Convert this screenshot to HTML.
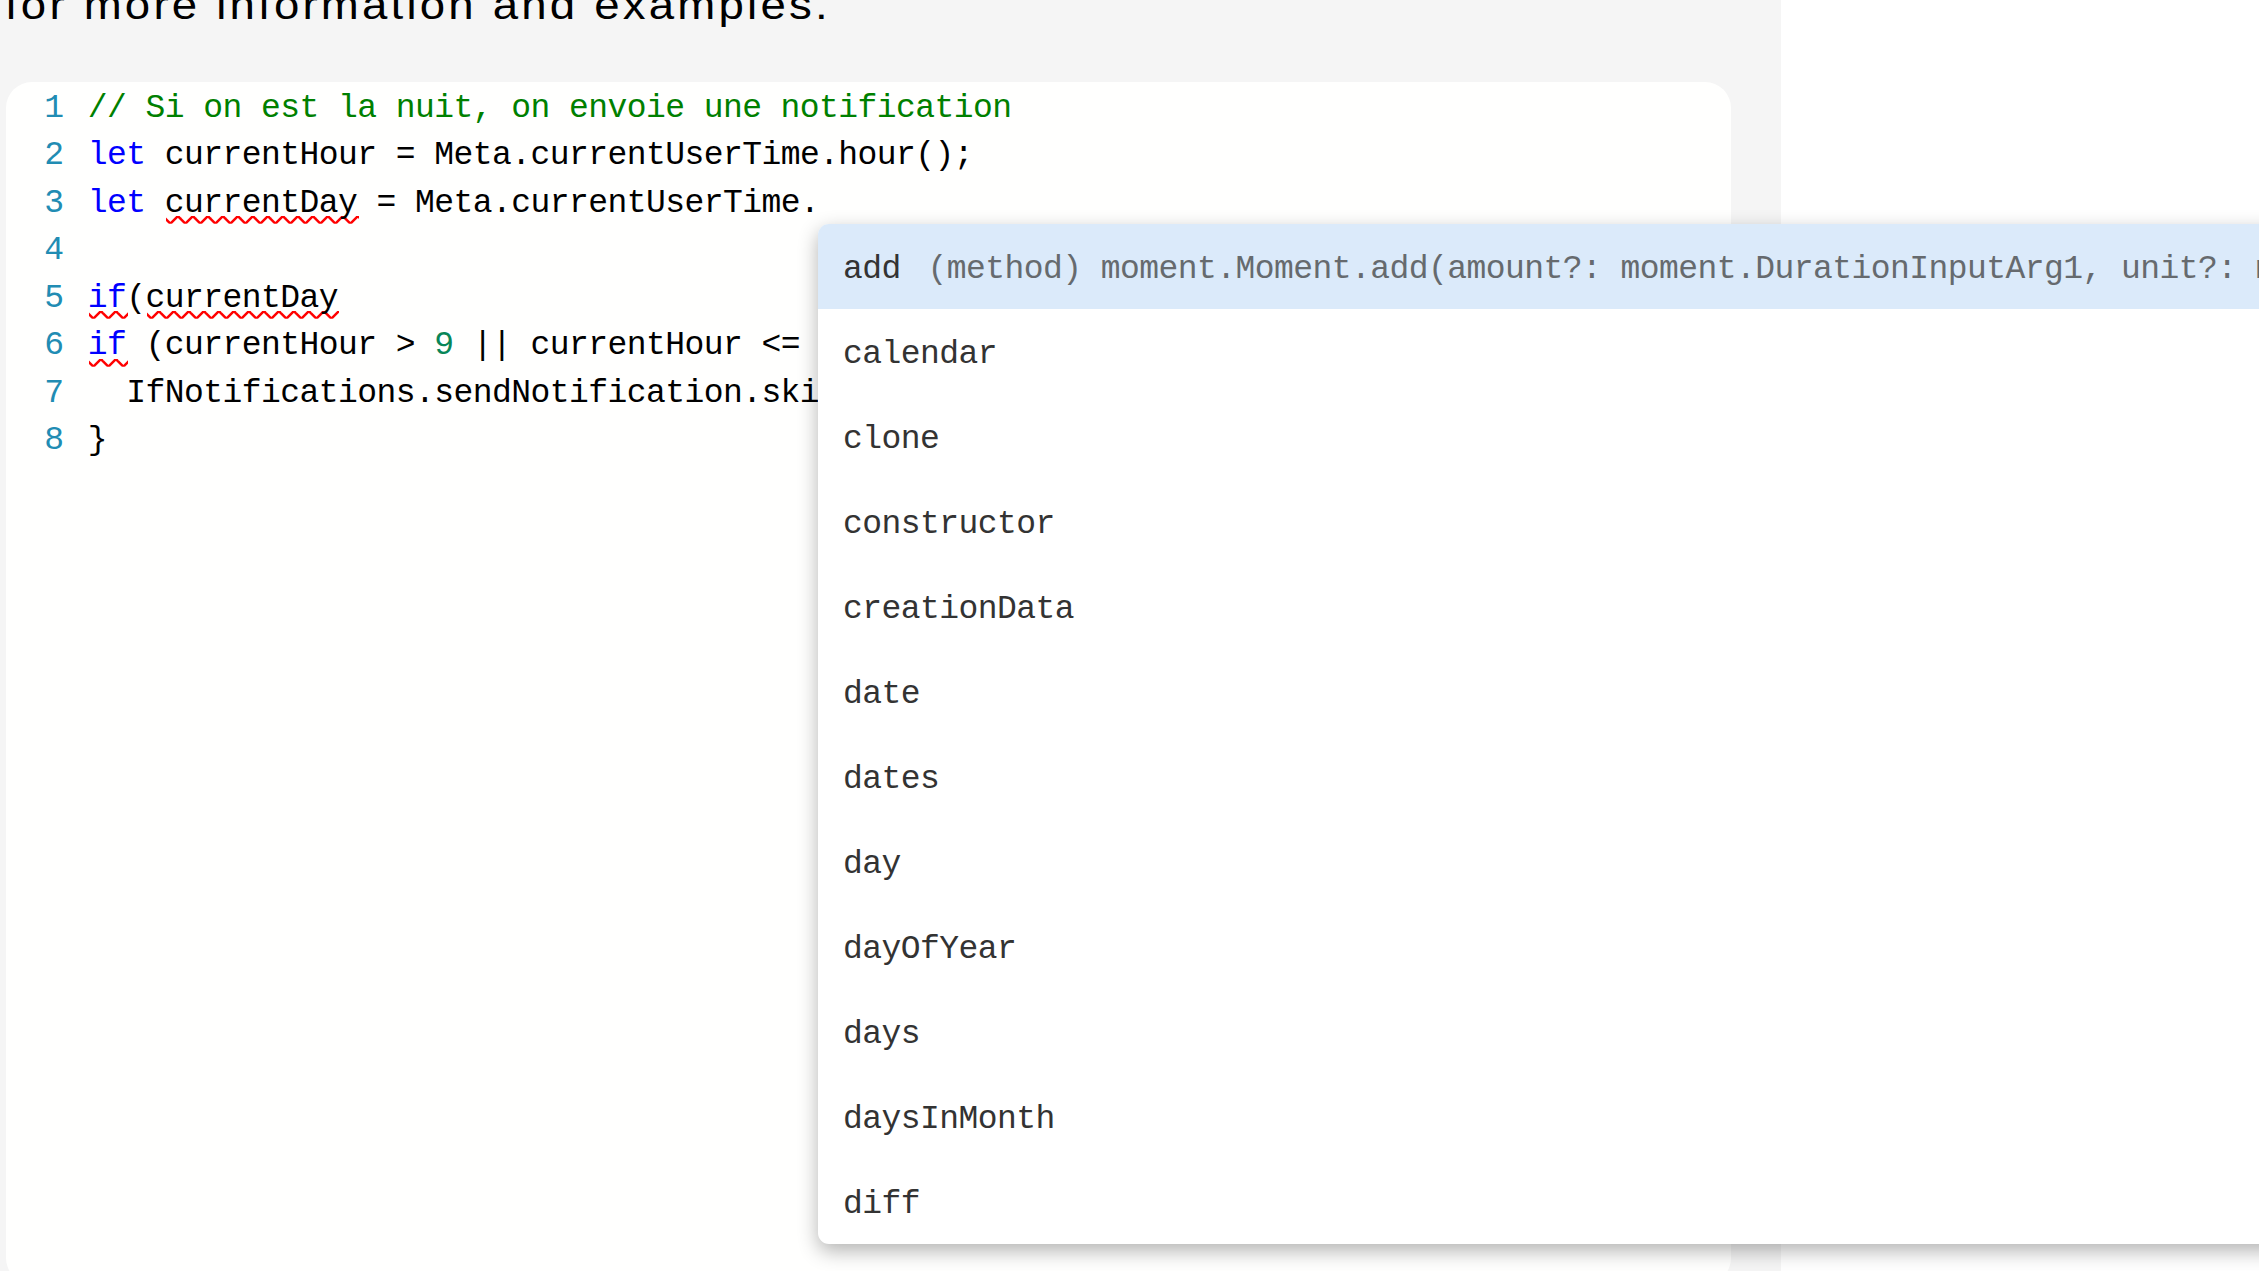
<!DOCTYPE html>
<html><head><meta charset="utf-8">
<style>
html,body{margin:0;padding:0}
body{width:2259px;height:1271px;overflow:hidden;position:relative;background:#ffffff;font-family:"Liberation Sans",sans-serif}
#gray{position:absolute;left:0;top:0;width:1781px;height:1271px;background:#f5f5f5}
#head{position:absolute;left:5px;top:-17px;font-family:"Liberation Sans",sans-serif;font-size:40px;letter-spacing:2.8px;line-height:44px;color:#000;white-space:pre;transform-origin:0 0;transform:scaleX(1.14)}
#editor{position:absolute;left:6px;top:82px;width:1725px;height:1202px;background:#fffffe;border-radius:26px;overflow:hidden}
.ln{position:absolute;left:0;width:57.5px;text-align:right;color:#218cb3}
.code,.ln{font-family:"Liberation Mono",monospace;font-size:33px;letter-spacing:-0.555px;line-height:47.43px;white-space:pre;margin-top:3px}
.code{position:absolute;left:81.7px;color:#000}
.kw{color:#0000ff}
.cm{color:#008000}
.nm{color:#098658}
.sq{position:absolute;overflow:hidden}
#popup{position:absolute;left:818px;top:224px;width:1500px;height:1020px;background:#fff;border-radius:11px 0 0 11px;box-shadow:0 7px 20px rgba(0,0,0,0.30);overflow:hidden}
.row{position:absolute;left:0;width:1500px;height:85px;font-family:"Liberation Mono",monospace;font-size:33px;letter-spacing:-0.555px;line-height:85px;white-space:pre;color:#333}
.row .lab{position:absolute;left:25px;top:2.9px}
.row .det{position:absolute;left:109.5px;top:2.9px;color:#666a6e}
.sel{background:#dbeafa}
</style></head><body>
<div id="gray"></div>
<div id="head">for more information and examples.</div>
<div id="editor">
<svg class="sq" style="left:calc(159.48px + 0.8px);top:134.29px" width="192.45" height="8" viewBox="0 0 192.45 8"><g fill="#ff0000"><polygon points="13.75,0 6.25,7.5 2.75,7.5 10.25,0"/><polygon points="10,0 15,5 15,1.5 13.5,0"/><polygon points="0,5 2.5,7.5 6,7.5 0,1.5"/><polygon points="28.75,0 21.25,7.5 17.75,7.5 25.25,0"/><polygon points="25,0 30,5 30,1.5 28.5,0"/><polygon points="15,5 17.5,7.5 21,7.5 15,1.5"/><polygon points="43.75,0 36.25,7.5 32.75,7.5 40.25,0"/><polygon points="40,0 45,5 45,1.5 43.5,0"/><polygon points="30,5 32.5,7.5 36,7.5 30,1.5"/><polygon points="58.75,0 51.25,7.5 47.75,7.5 55.25,0"/><polygon points="55,0 60,5 60,1.5 58.5,0"/><polygon points="45,5 47.5,7.5 51,7.5 45,1.5"/><polygon points="73.75,0 66.25,7.5 62.75,7.5 70.25,0"/><polygon points="70,0 75,5 75,1.5 73.5,0"/><polygon points="60,5 62.5,7.5 66,7.5 60,1.5"/><polygon points="88.75,0 81.25,7.5 77.75,7.5 85.25,0"/><polygon points="85,0 90,5 90,1.5 88.5,0"/><polygon points="75,5 77.5,7.5 81,7.5 75,1.5"/><polygon points="103.75,0 96.25,7.5 92.75,7.5 100.25,0"/><polygon points="100,0 105,5 105,1.5 103.5,0"/><polygon points="90,5 92.5,7.5 96,7.5 90,1.5"/><polygon points="118.75,0 111.25,7.5 107.75,7.5 115.25,0"/><polygon points="115,0 120,5 120,1.5 118.5,0"/><polygon points="105,5 107.5,7.5 111,7.5 105,1.5"/><polygon points="133.75,0 126.25,7.5 122.75,7.5 130.25,0"/><polygon points="130,0 135,5 135,1.5 133.5,0"/><polygon points="120,5 122.5,7.5 126,7.5 120,1.5"/><polygon points="148.75,0 141.25,7.5 137.75,7.5 145.25,0"/><polygon points="145,0 150,5 150,1.5 148.5,0"/><polygon points="135,5 137.5,7.5 141,7.5 135,1.5"/><polygon points="163.75,0 156.25,7.5 152.75,7.5 160.25,0"/><polygon points="160,0 165,5 165,1.5 163.5,0"/><polygon points="150,5 152.5,7.5 156,7.5 150,1.5"/><polygon points="178.75,0 171.25,7.5 167.75,7.5 175.25,0"/><polygon points="175,0 180,5 180,1.5 178.5,0"/><polygon points="165,5 167.5,7.5 171,7.5 165,1.5"/><polygon points="193.75,0 186.25,7.5 182.75,7.5 190.25,0"/><polygon points="190,0 195,5 195,1.5 193.5,0"/><polygon points="180,5 182.5,7.5 186,7.5 180,1.5"/></g></svg>
<svg class="sq" style="left:calc(82.50px + 0.8px);top:229.15px" width="38.49" height="8" viewBox="0 0 38.49 8"><g fill="#ff0000"><polygon points="13.75,0 6.25,7.5 2.75,7.5 10.25,0"/><polygon points="10,0 15,5 15,1.5 13.5,0"/><polygon points="0,5 2.5,7.5 6,7.5 0,1.5"/><polygon points="28.75,0 21.25,7.5 17.75,7.5 25.25,0"/><polygon points="25,0 30,5 30,1.5 28.5,0"/><polygon points="15,5 17.5,7.5 21,7.5 15,1.5"/><polygon points="43.75,0 36.25,7.5 32.75,7.5 40.25,0"/><polygon points="40,0 45,5 45,1.5 43.5,0"/><polygon points="30,5 32.5,7.5 36,7.5 30,1.5"/></g></svg>
<svg class="sq" style="left:calc(140.24px + 0.8px);top:229.15px" width="192.45" height="8" viewBox="0 0 192.45 8"><g fill="#ff0000"><polygon points="13.75,0 6.25,7.5 2.75,7.5 10.25,0"/><polygon points="10,0 15,5 15,1.5 13.5,0"/><polygon points="0,5 2.5,7.5 6,7.5 0,1.5"/><polygon points="28.75,0 21.25,7.5 17.75,7.5 25.25,0"/><polygon points="25,0 30,5 30,1.5 28.5,0"/><polygon points="15,5 17.5,7.5 21,7.5 15,1.5"/><polygon points="43.75,0 36.25,7.5 32.75,7.5 40.25,0"/><polygon points="40,0 45,5 45,1.5 43.5,0"/><polygon points="30,5 32.5,7.5 36,7.5 30,1.5"/><polygon points="58.75,0 51.25,7.5 47.75,7.5 55.25,0"/><polygon points="55,0 60,5 60,1.5 58.5,0"/><polygon points="45,5 47.5,7.5 51,7.5 45,1.5"/><polygon points="73.75,0 66.25,7.5 62.75,7.5 70.25,0"/><polygon points="70,0 75,5 75,1.5 73.5,0"/><polygon points="60,5 62.5,7.5 66,7.5 60,1.5"/><polygon points="88.75,0 81.25,7.5 77.75,7.5 85.25,0"/><polygon points="85,0 90,5 90,1.5 88.5,0"/><polygon points="75,5 77.5,7.5 81,7.5 75,1.5"/><polygon points="103.75,0 96.25,7.5 92.75,7.5 100.25,0"/><polygon points="100,0 105,5 105,1.5 103.5,0"/><polygon points="90,5 92.5,7.5 96,7.5 90,1.5"/><polygon points="118.75,0 111.25,7.5 107.75,7.5 115.25,0"/><polygon points="115,0 120,5 120,1.5 118.5,0"/><polygon points="105,5 107.5,7.5 111,7.5 105,1.5"/><polygon points="133.75,0 126.25,7.5 122.75,7.5 130.25,0"/><polygon points="130,0 135,5 135,1.5 133.5,0"/><polygon points="120,5 122.5,7.5 126,7.5 120,1.5"/><polygon points="148.75,0 141.25,7.5 137.75,7.5 145.25,0"/><polygon points="145,0 150,5 150,1.5 148.5,0"/><polygon points="135,5 137.5,7.5 141,7.5 135,1.5"/><polygon points="163.75,0 156.25,7.5 152.75,7.5 160.25,0"/><polygon points="160,0 165,5 165,1.5 163.5,0"/><polygon points="150,5 152.5,7.5 156,7.5 150,1.5"/><polygon points="178.75,0 171.25,7.5 167.75,7.5 175.25,0"/><polygon points="175,0 180,5 180,1.5 178.5,0"/><polygon points="165,5 167.5,7.5 171,7.5 165,1.5"/><polygon points="193.75,0 186.25,7.5 182.75,7.5 190.25,0"/><polygon points="190,0 195,5 195,1.5 193.5,0"/><polygon points="180,5 182.5,7.5 186,7.5 180,1.5"/></g></svg>
<svg class="sq" style="left:calc(82.50px + 0.8px);top:276.58px" width="38.49" height="8" viewBox="0 0 38.49 8"><g fill="#ff0000"><polygon points="13.75,0 6.25,7.5 2.75,7.5 10.25,0"/><polygon points="10,0 15,5 15,1.5 13.5,0"/><polygon points="0,5 2.5,7.5 6,7.5 0,1.5"/><polygon points="28.75,0 21.25,7.5 17.75,7.5 25.25,0"/><polygon points="25,0 30,5 30,1.5 28.5,0"/><polygon points="15,5 17.5,7.5 21,7.5 15,1.5"/><polygon points="43.75,0 36.25,7.5 32.75,7.5 40.25,0"/><polygon points="40,0 45,5 45,1.5 43.5,0"/><polygon points="30,5 32.5,7.5 36,7.5 30,1.5"/></g></svg>
  <div class="ln" style="top:0px">1</div>
  <div class="ln" style="top:47.43px">2</div>
  <div class="ln" style="top:94.86px">3</div>
  <div class="ln" style="top:142.29px">4</div>
  <div class="ln" style="top:189.72px">5</div>
  <div class="ln" style="top:237.15px">6</div>
  <div class="ln" style="top:284.58px">7</div>
  <div class="ln" style="top:332.01px">8</div>
  <div class="code" style="top:0px"><span class="cm">// Si on est la nuit, on envoie une notification</span></div>
  <div class="code" style="top:47.43px"><span class="kw">let</span> currentHour = Meta.currentUserTime.hour();</div>
  <div class="code" style="top:94.86px"><span class="kw">let</span> currentDay = Meta.currentUserTime.</div>
  <div class="code" style="top:189.72px"><span class="kw">if</span>(currentDay</div>
  <div class="code" style="top:237.15px"><span class="kw">if</span> (currentHour &gt; <span class="nm">9</span> || currentHour &lt;= <span class="nm">5</span>) {</div>
  <div class="code" style="top:284.58px">  IfNotifications.sendNotification.skip();</div>
  <div class="code" style="top:332.01px">}</div>
</div>
<div id="popup">
  <div class="row sel" style="top:0"><span class="lab">add</span><span class="det">(method) moment.Moment.add(amount?: moment.DurationInputArg1, unit?: moment.unitOfTime.DurationConstructor): moment.Moment</span></div>
  <div class="row" style="top:85px"><span class="lab">calendar</span></div>
  <div class="row" style="top:170px"><span class="lab">clone</span></div>
  <div class="row" style="top:255px"><span class="lab">constructor</span></div>
  <div class="row" style="top:340px"><span class="lab">creationData</span></div>
  <div class="row" style="top:425px"><span class="lab">date</span></div>
  <div class="row" style="top:510px"><span class="lab">dates</span></div>
  <div class="row" style="top:595px"><span class="lab">day</span></div>
  <div class="row" style="top:680px"><span class="lab">dayOfYear</span></div>
  <div class="row" style="top:765px"><span class="lab">days</span></div>
  <div class="row" style="top:850px"><span class="lab">daysInMonth</span></div>
  <div class="row" style="top:935px"><span class="lab">diff</span></div>
</div>
</body></html>
